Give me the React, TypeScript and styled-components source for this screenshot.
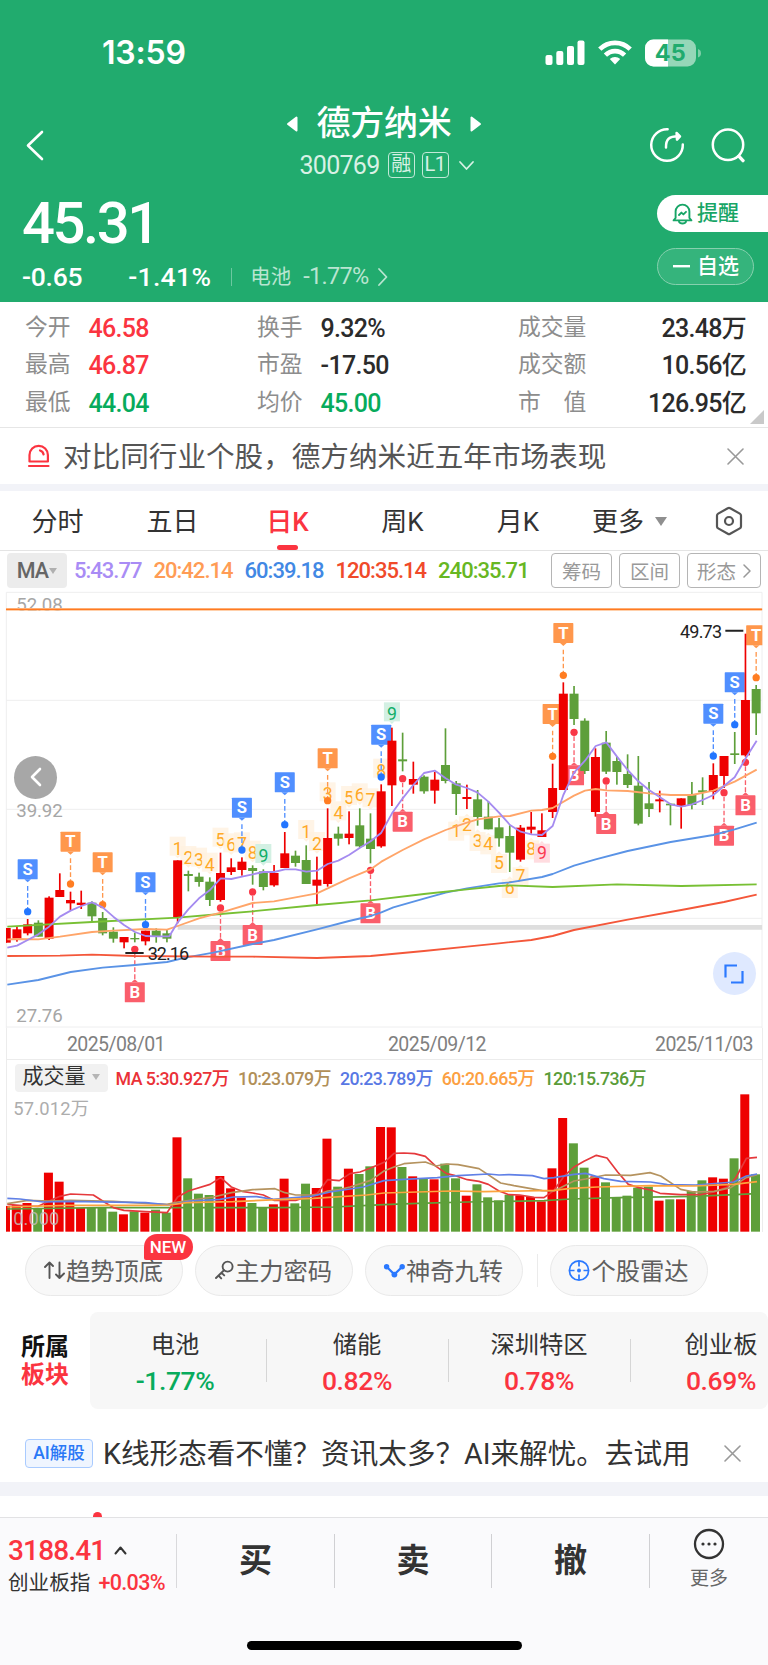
import React from 'react';
import styled, { createGlobalStyle } from 'styled-components';

const SANS = `Roboto, "Noto Sans CJK SC", sans-serif`;
const RED = '#fb3440';
const GREEN = '#07ab5c';
const UP = '#ee0000';
const DOWN = '#5e9f3a';

const GlobalStyle = createGlobalStyle`
  * { box-sizing: border-box; }
  body { margin: 0; background: #fff; font-family: ${SANS}; color: #333; }
  svg { display: block; flex: none; }
`;

const Page = styled.main`
  width: 768px;
  height: 1665px;
  overflow: hidden;
  display: flex;
  flex-direction: column;
  white-space: nowrap;
`;

const Num = styled.span<{ $size: number; $color?: string; $weight?: number; $track?: number }>`
  font-size: ${(p) => p.$size}px;
  line-height: 1;
  color: ${(p) => p.$color ?? 'inherit'};
  font-weight: ${(p) => p.$weight ?? 400};
  letter-spacing: ${(p) => p.$track ?? -0.03}em;
`;

/* ---------- header ---------- */

const Header = styled.header`
  height: 302px;
  flex: none;
  background: #21ab6e;
  color: #fff;
  display: flex;
  flex-direction: column;
`;

const StatusBar = styled.div`
  height: 100px;
  padding: 5px 67px 0 102px;
  display: flex;
  align-items: center;
  justify-content: space-between;
`;

const Clock = styled.span`
  font: 600 32px/1 Inter, sans-serif;
  letter-spacing: -0.2px;
`;

const StatusIcons = styled.div`
  display: flex;
  align-items: center;
  gap: 13px;
`;

const TitleBar = styled.div`
  height: 92px;
  display: grid;
  grid-template-columns: 250px 1fr 250px;
  align-items: start;
`;

const BackSlot = styled.div`
  padding: 30px 0 0 26px;
`;

const TitleStack = styled.div`
  display: flex;
  flex-direction: column;
  align-items: center;
`;

const NameRow = styled.div`
  display: flex;
  align-items: center;
  gap: 18px;
  height: 47px;
`;

const StockName = styled.h1`
  margin: 0;
  font-size: 34px;
  line-height: 49px;
  font-weight: 500;
  letter-spacing: -0.2px;
`;

const CodeRow = styled.div`
  display: flex;
  align-items: center;
  height: 36px;
  padding-left: 14px;
  color: #d8f1e5;
`;

const Badge = styled.span<{ $left: number }>`
  width: 27px;
  height: 26px;
  margin-left: ${(p) => p.$left}px;
  border: 1.5px solid #c3e9d8;
  border-radius: 4px;
  font-size: 20px;
  line-height: 23px;
  letter-spacing: -0.5px;
  text-align: center;
`;

const HeaderActions = styled.div`
  display: flex;
  justify-content: flex-end;
  gap: 25px;
  padding: 27px 22px 0 0;
`;

const QuoteBar = styled.div`
  flex: 1;
  display: flex;
  justify-content: space-between;
`;

const QuoteLeft = styled.div`
  padding: 5px 0 0 22px;
`;

const Price = styled.div`
  font-size: 58px;
  line-height: 52px;
  font-weight: 500;
  letter-spacing: -0.042em;
`;

const ChangeRow = styled.div`
  display: flex;
  align-items: center;
  height: 30px;
  margin-top: 13px;
`;

const ChangePercent = styled(Num)`
  margin-left: 46px;
`;

const ThinRule = styled.i`
  width: 1px;
  height: 18px;
  margin: 0 18px 0 20px;
  background: #6cc8a0;
`;

const SectorLink = styled.span`
  display: flex;
  align-items: center;
  gap: 12px;
  color: #b9e5d1;
  font-size: 20.5px;
  line-height: 26px;
`;

const SectorChange = styled.span`
  display: flex;
  align-items: center;
`;

const QuoteButtons = styled.div`
  display: flex;
  flex-direction: column;
  gap: 16px;
  padding-top: 3px;
`;

const AlertPill = styled.button`
  width: 111px;
  height: 37px;
  padding: 0 0 0 15px;
  display: flex;
  align-items: center;
  gap: 4px;
  border: 0;
  border-radius: 19px 0 0 19px;
  background: #fff;
  color: #17a566;
  font: 500 21px/1 ${SANS};
`;

const WatchPill = styled(AlertPill)`
  width: 97px;
  padding-left: 15px;
  gap: 7px;
  border: 1.5px solid #86d0ae;
  border-radius: 19px;
  background: #35b47c;
  color: #fff;
`;

/* ---------- statistics ---------- */

const Stats = styled.section`
  position: relative;
  height: 125px;
  flex: none;
  padding-top: 7.5px;
  display: grid;
  grid-template-columns: 232px 261px 275px;
  grid-auto-rows: 37.6px;
`;

const Stat = styled.div<{ $end?: boolean }>`
  display: flex;
  align-items: center;
  justify-content: ${(p) => (p.$end ? 'space-between' : 'flex-start')};
  gap: 18px;
  padding: 0 ${(p) => (p.$end ? 22 : 0)}px 0 25px;
`;

const StatLabel = styled.span`
  font-size: 22.8px;
  line-height: 1;
  color: #8d8d8d;
  white-space: pre;
`;

const Corner = styled.i`
  position: absolute;
  right: 4px;
  bottom: 3px;
  border-left: 14px solid transparent;
  border-bottom: 14px solid #c9c9c9;
`;

const Notice = styled.section<{ $height: number; $top?: boolean; $drop: number; $color: string }>`
  height: ${(p) => p.$height}px;
  flex: none;
  display: flex;
  align-items: center;
  padding: ${(p) => p.$drop}px 24px 0 25px;
  border-top: ${(p) => (p.$top ? '1px solid #e6e6e6' : '0')};
  font-size: 28.6px;
  color: ${(p) => p.$color};
`;

const NoticeText = styled.span<{ $left: number; $drop?: number }>`
  flex: 1;
  margin-left: ${(p) => p.$left}px;
  padding-top: ${(p) => p.$drop ?? 0}px;
  line-height: 1;
`;

const NoticeClose = styled.span`
  padding-right: 3px;
`;

const Band = styled.div<{ $height: number }>`
  height: ${(p) => p.$height}px;
  flex: none;
  background: #f2f3f8;
`;

/* ---------- period tabs ---------- */

const Tabs = styled.nav`
  height: 60px;
  flex: none;
  display: grid;
  grid-template-columns: 115px 115px 115px 115px 116px 107px 1fr;
  border-bottom: 1px solid #e4e4e4;
`;

const Tab = styled.div<{ $active?: boolean }>`
  position: relative;
  display: flex;
  align-items: center;
  justify-content: center;
  gap: 11px;
  padding-top: 2px;
  font-size: 26px;
  line-height: 1;
  color: ${(p) => (p.$active ? RED : '#333')};
  font-weight: ${(p) => (p.$active ? 500 : 400)};

  &::after {
    content: '';
    display: ${(p) => (p.$active ? 'block' : 'none')};
    position: absolute;
    left: 47px;
    bottom: 0;
    width: 21px;
    height: 5px;
    border-radius: 3px;
    background: ${RED};
  }
`;

const SettingsTab = styled(Tab)`
  justify-content: flex-end;
  padding: 0 25px 0 0;
`;

const Caret = styled.i<{ $size: number; $color: string }>`
  border: ${(p) => p.$size}px solid transparent;
  border-top: ${(p) => p.$size * 1.4}px solid ${(p) => p.$color};
  border-bottom: 0;
`;

const MaBar = styled.div`
  height: 40px;
  flex: none;
  padding: 2px 7px 0;
  display: flex;
  align-items: flex-start;
  justify-content: space-between;
`;

const MaList = styled.div`
  display: flex;
  align-items: center;
  height: 35px;
`;

const MaPick = styled.span`
  width: 60px;
  height: 35px;
  margin-right: 7px;
  display: flex;
  align-items: center;
  justify-content: center;
  gap: 1px;
  border-radius: 4px;
  background: #ececec;
  color: #666;
  font-size: 21.5px;
  font-weight: 500;
  letter-spacing: -0.8px;
`;

const MaItem = styled(Num)`
  margin-right: 12px;
  padding-top: 1px;
`;

const ToolList = styled.div`
  display: flex;
  gap: 7px;
`;

const Tool = styled.span<{ $width: number }>`
  width: ${(p) => p.$width}px;
  height: 35px;
  display: flex;
  align-items: center;
  justify-content: center;
  gap: 7px;
  border: 1.5px solid #b5b5b5;
  border-radius: 4px;
  color: #999;
  font-size: 19.5px;
`;

/* ---------- charts ---------- */

const ChartArea = styled.section`
  position: relative;
  height: 437px;
  flex: none;
`;

const RoundButton = styled.span<{ $x: number; $y: number; $bg: string }>`
  position: absolute;
  left: ${(p) => p.$x}px;
  top: ${(p) => p.$y}px;
  width: 43px;
  height: 43px;
  display: flex;
  align-items: center;
  justify-content: center;
  border-radius: 50%;
  background: ${(p) => p.$bg};
`;

const DateAxis = styled.div`
  height: 31px;
  flex: none;
  margin: 0 5px 0 6px;
  padding: 3px 9px 0 0;
  display: grid;
  grid-template-columns: 60px 321px 1fr auto;
  align-items: center;
  border: 1px solid #ececec;
  border-width: 0 1.5px;

  &::before {
    content: '';
  }
`;

const VolumePanel = styled.section`
  height: 173px;
  flex: none;
  margin: 0 5px 0 6px;
  border: 1.5px solid #ececec;
  border-bottom: 0;
`;

const VolumeLegend = styled.div`
  height: 36px;
  display: flex;
  align-items: center;
  padding-left: 7.5px;
`;

const VolumePick = styled.span`
  width: 93px;
  height: 28px;
  margin-right: 8px;
  display: flex;
  align-items: center;
  justify-content: center;
  gap: 6px;
  padding-bottom: 3px;
  border-radius: 4px;
  background: #f1f1f1;
  font-size: 21px;
  line-height: 25px;
`;

const VolumeItem = styled(Num)`
  margin-right: 9px;
  padding-top: 1px;
`;

const VolumeSvg = styled.svg`
  margin-left: -7.5px;
  overflow: visible;
`;

/* ---------- tools and sectors ---------- */

const PillRow = styled.section`
  height: 80px;
  flex: none;
  padding: 13px 0 0 24.5px;
  display: flex;
  align-items: flex-start;
  gap: 12px;
`;

const Pill = styled.span`
  position: relative;
  width: 158px;
  height: 51px;
  display: flex;
  align-items: center;
  justify-content: center;
  padding: 0 1px 2px 0;
  border: 1.5px solid #e9e9e9;
  border-radius: 26px;
  background: #f8f8f8;
  color: #5f5f5f;
  font-size: 24.3px;
`;

const PillRule = styled.i`
  width: 1px;
  height: 33px;
  margin: 9px 0 0 2px;
  background: #ebebeb;
`;

const NewTag = styled.span`
  position: absolute;
  left: 118px;
  top: -12px;
  width: 49px;
  height: 26px;
  border-radius: 13px 13px 13px 2px;
  background: ${RED};
  color: #fff;
  font-size: 17px;
  font-weight: 500;
  line-height: 27px;
  text-align: center;
`;

const SectorRow = styled.section`
  height: 97px;
  flex: none;
  display: flex;
`;

const SectorTitle = styled.div`
  width: 90px;
  padding: 21px 0 0 21px;
  font-size: 24px;
  line-height: 28px;
  font-weight: 700;
  color: #111;

  em {
    display: block;
    font-style: normal;
    color: ${RED};
  }
`;

const SectorList = styled.div`
  width: 678px;
  display: flex;
  overflow: hidden;
  border-radius: 8px;
  background: #f7f7f7;
`;

const Sector = styled.div`
  width: 182px;
  flex: none;
  margin-left: -6px;
  margin-right: 6px;
  display: flex;
  flex-direction: column;
  align-items: center;
  gap: 9px;
  padding-top: 19px;
  font-size: 24.3px;
  line-height: 28px;
`;

const SectorRule = styled.i`
  width: 1px;
  height: 43px;
  flex: none;
  margin: 27px 5px 0 -6px;
  background: #d6d6d6;
`;

const AiTag = styled.span`
  width: 68px;
  height: 29px;
  border: 1.5px solid #a9cbff;
  border-radius: 4px;
  background: #eff5ff;
  color: #2a78f6;
  font-size: 17.5px;
  font-weight: 500;
  line-height: 26px;
  text-align: center;
`;

/* ---------- footer ---------- */

const PeekStrip = styled.div`
  height: 21px;
  flex: none;
  padding: 16px 0 0 92.5px;
  overflow: hidden;

  i {
    display: block;
    width: 9px;
    height: 9px;
    border-radius: 50%;
    background: ${RED};
  }
`;

const Footer = styled.footer`
  flex: 1;
  border-top: 1.5px solid #e2e2e4;
  background: #fafafc;
`;

const ActionBar = styled.div`
  height: 106px;
  padding-top: 16px;
  display: grid;
  grid-template-columns: 177px 158px 157px 158px 118px;
`;

const IndexCell = styled.div`
  height: 54px;
  padding: 2px 0 0 8px;
  border-right: 1px solid #d9d9dc;
`;

const IndexLine = styled.div<{ $height: number; $gap: number }>`
  height: ${(p) => p.$height}px;
  display: flex;
  align-items: center;
  gap: ${(p) => p.$gap}px;
  font-size: 20.6px;
  line-height: 1;
`;

const Action = styled.button`
  height: 54px;
  padding: 0;
  border: 0;
  border-right: 1px solid #d0d0d3;
  background: none;
  color: #333;
  font: 700 33px/54px ${SANS};
`;

const MoreCell = styled.div`
  display: flex;
  flex-direction: column;
  align-items: center;
  margin-top: -6px;
  gap: 3px;
  color: #666;
  font-size: 19px;
`;

const HomeBar = styled.i`
  display: block;
  width: 275px;
  height: 9px;
  margin: 17px auto 0;
  border-radius: 5px;
  background: #000;
`;

/* ---------- chart data, in thirds of a pixel ---------- */

const STEP = 32.14;
const xAt = (i: number) => 18.7 + i * STEP;

type Candle = [up: number, high: number, top: number, bottom: number, low: number];

const CANDLES: Candle[] = [
  [1, 1014, 1014, 1058, 1058], [1, 1008, 1018, 1046, 1055], [1, 987, 1003, 1030, 1036], [0, 991, 998, 1040, 1040],
  [1, 919, 923, 1046, 1050], [1, 850, 900, 921, 921], [1, 905, 930, 940, 960], [1, 902, 938, 945, 957],
  [0, 934, 938, 979, 995], [0, 966, 984, 1030, 1036], [0, 1012, 1025, 1046, 1058], [1, 1041, 1041, 1057, 1075],
  [0, 1028, 1044, 1048, 1057], [1, 1022, 1022, 1054, 1066], [0, 1015, 1022, 1040, 1058], [0, 1020, 1030, 1046, 1057],
  [1, 811, 811, 983, 1000], [0, 842, 852, 858, 904], [0, 848, 860, 876, 890], [0, 862, 875, 930, 948],
  [1, 788, 849, 930, 935], [1, 805, 832, 846, 855], [1, 802, 815, 840, 857], [0, 826, 834, 843, 884],
  [0, 838, 844, 891, 901], [1, 825, 849, 886, 890], [1, 726, 790, 834, 834], [0, 782, 797, 819, 830],
  [0, 766, 810, 882, 882], [1, 800, 869, 887, 944], [1, 655, 744, 882, 890], [0, 710, 731, 746, 767],
  [1, 664, 731, 744, 763], [0, 655, 706, 769, 774], [0, 670, 746, 777, 820], [1, 583, 604, 769, 773],
  [1, 413, 452, 586, 648], [0, 428, 508, 514, 544], [1, 515, 567, 584, 611], [0, 556, 560, 604, 611],
  [1, 546, 569, 602, 641], [0, 415, 525, 573, 580], [0, 573, 580, 612, 675], [1, 584, 621, 627, 657],
  [0, 600, 628, 681, 707], [0, 633, 680, 718, 718], [0, 684, 712, 745, 770], [0, 706, 738, 788, 846],
  [1, 705, 713, 809, 815], [1, 666, 710, 719, 731], [1, 670, 721, 741, 741], [1, 521, 594, 666, 684],
  [1, 277, 311, 600, 600], [0, 288, 311, 387, 405], [0, 385, 392, 543, 552], [1, 475, 501, 666, 680],
  [0, 423, 458, 545, 552], [0, 500, 513, 546, 584], [0, 493, 552, 585, 594], [0, 498, 587, 701, 706],
  [0, 576, 640, 657, 681], [1, 602, 628, 634, 667], [0, 640, 641, 646, 706], [1, 625, 625, 649, 716],
  [0, 576, 613, 645, 658], [0, 562, 601, 607, 645], [1, 520, 555, 606, 628], [1, 498, 498, 558, 594],
  [0, 426, 490, 495, 522], [1, 131, 330, 496, 500], [0, 285, 297, 370, 435],
];

const VOLUME_TOPS = [
  557, 555, 548, 565, 457, 484, 540, 563, 563, 562, 574, 582, 573, 577, 568, 577, 351, 474, 520, 524, 467, 504, 532,
  548, 560, 552, 475, 549, 490, 503, 355, 499, 445, 461, 438, 320, 321, 440, 468, 473, 477, 430, 474, 526, 492, 531,
  540, 523, 525, 530, 543, 444, 293, 369, 442, 468, 486, 530, 526, 502, 499, 541, 537, 537, 512, 480, 471, 475, 414,
  222, 462,
];

const PRICE_LINES: [string, string][] = [
  ['#5a93e6', '22,1184 115,1170 212,1146 308,1133 405,1125 501,1116 560,1102 640,1088 758,1062 822,1050 951,1018 1047,993 1112,978 1144,967 1180,952 1272,926 1337,908 1401,895 1497,880 1530,877 1626,861 1658,852 1722,827 1787,808 1883,783 2012,756 2140,735 2204,718 2270,698'],
  ['#f4573a', '22,1098 180,1097 276,1094 405,1098 640,1100 758,1100 951,1104 1112,1098 1272,1083 1401,1070 1497,1060 1594,1050 1658,1038 1722,1020 1883,989 2044,960 2172,936 2270,914'],
  ['#78c034', '22,1010 276,996 533,983 662,972 758,964 951,945 1112,931 1272,912 1401,898 1497,888 1530,886 1658,891 1851,883 2044,888 2270,883'],
  ['#ffa569', '22,1048 51,1047 115,1048 180,1040 276,1026 340,1022 437,1017 501,1019 533,1008 597,985 662,968 758,939 822,934 951,910 1047,865 1112,838 1144,815 1208,780 1272,748 1337,720 1401,698 1433,688 1497,679 1530,678 1594,662 1626,660 1658,654 1722,617 1755,602 1787,597 1819,601 1883,603 1947,610 2012,615 2076,615 2140,602 2204,575 2237,557 2270,539'],
  ['#a58bf0', '22,1073 51,1067 83,1050 115,1033 147,1010 180,980 212,962 244,948 276,937 308,952 340,980 372,1005 405,1026 437,1038 469,1039 508,1039 533,997 565,958 597,925 630,900 662,865 694,867 726,860 758,853 790,846 822,846 855,838 887,838 919,845 951,842 983,822 1015,812 1047,795 1080,773 1112,754 1144,728 1176,670 1208,625 1240,585 1272,549 1305,542 1337,565 1369,584 1401,594 1433,608 1465,635 1497,668 1530,705 1562,725 1594,733 1626,735 1658,708 1690,615 1722,548 1755,512 1787,468 1819,457 1851,500 1883,540 1915,574 1947,600 1980,622 2012,643 2044,650 2076,643 2108,630 2140,615 2172,588 2204,562 2237,505 2270,452'],
];

const VOLUME_LINES: [string, string][] = [
  ['#5e9f3a', '22,566 300,562 830,562 1000,560 1152,553 1252,549 1402,545 1632,541 1712,536 1852,532 2082,528 2271,520'],
  ['#e5393c', '22,552 83,557 115,558 147,542 180,528 212,521 280,524 308,542 340,562 372,570 437,574 501,577 533,530 565,512 630,492 662,472 694,500 726,513 758,518 790,524 822,540 887,540 951,520 983,478 1018,481 1050,460 1080,455 1112,443 1154,425 1182,399 1212,398 1244,400 1276,408 1308,438 1340,460 1366,466 1402,478 1437,483 1465,492 1497,512 1527,523 1559,524 1602,531 1632,532 1662,510 1692,468 1722,440 1752,423 1789,405 1821,413 1853,455 1885,492 1917,502 1952,509 1980,519 2042,523 2102,523 2142,515 2182,500 2207,473 2239,414 2271,411'],
  ['#b5935f', '22,550 83,540 147,542 212,540 340,543 450,550 501,552 533,545 640,530 694,517 758,508 825,505 855,517 887,524 951,524 983,512 1018,508 1050,500 1112,480 1152,452 1182,440 1212,430 1276,425 1308,437 1340,431 1374,433 1437,445 1502,488 1542,496 1627,511 1662,512 1722,482 1757,476 1817,464 1892,465 1950,457 1982,467 2042,507 2082,515 2142,513 2192,502 2239,472 2271,463'],
  ['#6080e6', '22,534 60,536 130,545 212,543 437,547 510,554 570,542 660,537 700,530 770,529 820,537 940,527 990,515 1090,500 1152,481 1212,477 1312,472 1374,466 1465,461 1497,464 1527,463 1597,466 1632,475 1662,472 1722,462 1757,459 1812,475 1862,483 1952,485 2002,493 2087,494 2202,485 2239,467 2271,461'],
  ['#fba43f', '22,560 200,555 450,555 510,554 560,547 700,544 850,537 940,534 1100,524 1152,518 1252,515 1352,512 1452,514 1662,510 1712,504 1792,500 1952,496 2082,497 2202,492 2271,484'],
];

type Side = 'S' | 'T' | 'B';
const MARKS: [Side, number, number][] = [
  ['S', 2, 965], ['S', 13, 1004], ['S', 22, 780], ['S', 26, 704], ['S', 35, 561], ['S', 66, 498], ['S', 68, 404],
  ['T', 6, 882], ['T', 9, 944], ['T', 30, 632], ['T', 51, 499], ['T', 52, 256], ['T', 70, 263],
  ['B', 12, 1078], ['B', 20, 954], ['B', 23, 906], ['B', 34, 841], ['B', 37, 566], ['B', 53, 427], ['B', 56, 573],
  ['B', 67, 608], ['B', 69, 517],
];
const MARK_FILL: Record<Side, string> = { S: '#508fff', T: '#ff974c', B: '#fa5e6b' };
const DOT_FILL: Record<Side, string> = { S: '#2376ff', T: '#ff7d22', B: '#f93746' };

/* digit, candle, centre of the digit, side of the candle */
const COUNTS: [number, number, number, number][] = [
  [1, 16, 775, 1], [2, 17, 803, 1], [3, 18, 808, 1], [4, 19, 823, 1], [5, 20, 748, 1], [6, 21, 765, 1],
  [7, 22, 762, 1], [8, 23, 787, 1], [9, 24, 797, 1], [1, 28, 725, 1], [2, 29, 761, 1], [3, 30, 612, 1],
  [4, 31, 669, 1], [5, 32, 623, 1], [6, 33, 615, 1], [7, 34, 630, 1], [8, 35, 541, 1], [9, 36, 372, 1],
  [1, 42, 721, 0], [2, 43, 705, 0], [3, 44, 752, 0], [4, 45, 762, 0], [5, 46, 818, 0], [6, 47, 893, 0],
  [7, 48, 858, 0], [8, 49, 777, 0], [9, 50, 787, 0],
];

const Mark = ({ side, index, dot }: { side: Side; index: number; dot: number }) => {
  const x = xAt(index);
  const below = side === 'B';
  const top = below ? dot + 99 : dot - 157;
  const tip = below ? `M${x - 10} ${top}l10 -9l10 9z` : `M${x - 10} ${top + 60}l10 9l10 -9z`;
  return (
    <g>
      <path
        d={below ? `M${x} ${dot + 12}V${top - 8}` : `M${x} ${top + 80}V${dot - 10}`}
        stroke={MARK_FILL[side]}
        strokeWidth={4}
        strokeDasharray="14 7"
      />
      <rect x={x - 30} y={top} width={60} height={60} rx={2} fill={MARK_FILL[side]} />
      <path d={tip} fill={MARK_FILL[side]} />
      <text x={x} y={top + 47} fontSize={50} fontWeight={700} textAnchor="middle" fill="#fff">{side}</text>
      <circle cx={x} cy={dot} r={11} fill={DOT_FILL[side]} />
    </g>
  );
};

const Count = ({ digit, index, y, above }: { digit: number; index: number; y: number; above: boolean }) => {
  const x = xAt(index);
  const last = digit === 9;
  const bg = !last ? '#fff1e0' : above ? '#d3f0e3' : '#ffdce0';
  const fg = !last ? '#ffa928' : above ? '#12ae68' : '#fb3a50';
  const top = above ? y - 35 : y - 26;
  return (
    <g>
      <rect x={x - 24} y={top} width={48} height={57} fill={bg} fillOpacity={last ? 1 : 0.8} />
      <path d={above ? `M${x - 8} ${top + 57}l8 8l8 -8z` : `M${x - 8} ${top}l8 -8l8 8z`} fill={bg} />
      <text x={x} y={y + 19} fontSize={53} textAnchor="middle" fill={fg}>{digit}</text>
    </g>
  );
};

const PriceChart = () => (
  <svg width="768" height="437" viewBox="0 3 2304 1311" fontFamily="Roboto">
    <defs>
      <clipPath id="plot"><rect x="18" y="0" width="2269" height="1320" /></clipPath>
    </defs>
    <g stroke="#eeeeef" strokeWidth="3" fill="none">
      <path d="M19 7H2286V1320M19 7V1320M19 331H2286M19 658H2286M19 985H2286M19 1311H2286" />
    </g>
    <g fill="#a6a6a6" fontSize="56">
      <text x="49" y="64" textLength="139">52.08</text>
      <text x="49" y="680" textLength="139">39.92</text>
      <text x="49" y="1296" textLength="139">27.76</text>
    </g>
    <g clipPath="url(#plot)">
      <path d="M18 58H2287" stroke="#ffc08f" strokeWidth="8" />
      <path d="M18 58H2287" stroke="#ff7a22" strokeWidth="4" />
      <path d="M533 1012H2287" stroke="#dedede" strokeWidth="14" />
      {COUNTS.map(([d, i, y, up]) => <Count key={i} digit={d} index={i} y={y} above={up === 1} />)}
      {MARKS.map(([s, i, y]) => <Mark key={s + i} side={s} index={i} dot={y} />)}
      {CANDLES.map(([up, high, top, bottom, low], i) => (
        <g key={i} fill={up ? UP : DOWN}>
          <rect x={xAt(i) - 2.5} y={high} width={5} height={low - high} />
          <rect x={xAt(i) - 13.5} y={top} width={27} height={bottom - top} />
        </g>
      ))}
      {PRICE_LINES.map(([color, points]) => (
        <polyline key={color} points={points} fill="none" stroke={color} strokeWidth="5.5" strokeLinejoin="round" />
      ))}
    </g>
    <g stroke="#222" strokeWidth="6">
      <path d="M376 1089H431M2176 122H2230" />
    </g>
    <g fill="#222" fontSize="54">
      <text x="443" y="1110" textLength="124">32.16</text>
      <text x="2040" y="143" textLength="126">49.73</text>
    </g>
  </svg>
);

/* ---------- icons ---------- */

const Chevron = ({ w, h, d, color, sw }: { w: number; h: number; d: string; color: string; sw: number }) => (
  <svg width={w} height={h} viewBox={`0 0 ${w} ${h}`} fill="none" stroke={color} strokeWidth={sw} strokeLinecap="round" strokeLinejoin="round">
    <path d={d} />
  </svg>
);

const CloseIcon = () => <Chevron w={17} h={17} d="M1 1L16 16M16 1L1 16" color="#999" sw={1.6} />;

const STATS: [string, string, string?][] = [
  ['今开', '46.58', RED], ['换手', '9.32%'], ['成交量', '23.48万'],
  ['最高', '46.87', RED], ['市盈', '-17.50'], ['成交额', '10.56亿'],
  ['最低', '44.04', GREEN], ['均价', '45.00', GREEN], ['市　值', '126.95亿'],
];

const MA_ITEMS = [
  ['5:43.77', '#a98cf5'], ['20:42.14', '#ff9c55'], ['60:39.18', '#4288e4'], ['120:35.14', '#f04a2a'], ['240:35.71', '#67b722'],
];

const VOL_ITEMS = [
  ['MA 5:30.927万', '#ea3137'], ['10:23.079万', '#b18f58'], ['20:23.789万', '#5878e4'], ['60:20.665万', '#fca042'], ['120:15.736万', '#5a9c38'],
];

const SECTORS = [
  ['电池', '-1.77%', GREEN], ['储能', '0.82%', RED], ['深圳特区', '0.78%', RED], ['创业板', '0.69%', RED],
];

export default function App() {
  return (
    <Page>
      <GlobalStyle />
      <Header>
        <StatusBar>
          <Clock>13:59</Clock>
          <StatusIcons>
            <svg width="40" height="26" viewBox="0 0 40 26" fill="#fff">
              <rect x="0.5" y="15" width="7" height="10" rx="2" />
              <rect x="11.3" y="11" width="7" height="14" rx="2" />
              <rect x="22" y="6" width="7" height="19" rx="2" />
              <rect x="32.5" y="0.5" width="7" height="24.5" rx="2" />
            </svg>
            <svg width="34" height="25" viewBox="0 0 34 25" fill="none" stroke="#fff" strokeWidth="4.6">
              <path d="M1.8 9.2C10 .7 24 .7 32.2 9.2" />
              <path d="M7.4 15.2C12.8 9.8 21.2 9.8 26.6 15.2" />
              <path d="M17 24.5L11.8 19C14.6 16.3 19.4 16.3 22.2 19Z" fill="#fff" stroke="none" />
            </svg>
            <svg width="56" height="28" viewBox="0 0 56 28">
              <defs><clipPath id="cell"><rect width="51" height="27" y=".5" rx="8.5" /></clipPath></defs>
              <g clipPath="url(#cell)">
                <rect width="51" height="28" fill="#95d7b8" />
                <rect width="23" height="28" fill="#fff" />
              </g>
              <path d="M53 10q3 1 3 4.2t-3 4.2z" fill="#7fcfa9" />
              <text x="25.2" y="22.3" fontFamily="Inter" fontWeight="700" fontSize="23.5" textAnchor="middle" fill="#21ab6e" textLength="31">45</text>
            </svg>
          </StatusIcons>
        </StatusBar>
        <TitleBar>
          <BackSlot><Chevron w={18} h={31} d="M16 2L2 15.5L16 29" color="#fff" sw={2.6} /></BackSlot>
          <TitleStack>
            <NameRow>
              <svg width="12" height="18" viewBox="0 0 12 18"><path d="M10.5 2.5V15.5L2 9Z" fill="#fff" stroke="#fff" strokeWidth="2" strokeLinejoin="round" /></svg>
              <StockName>德方纳米</StockName>
              <svg width="12" height="18" viewBox="0 0 12 18"><path d="M1.5 2.5V15.5L10 9Z" fill="#fff" stroke="#fff" strokeWidth="2" strokeLinejoin="round" /></svg>
            </NameRow>
            <CodeRow>
              <Num $size={25} $track={-0.028}>300769</Num>
              <Badge $left={8}>融</Badge>
              <Badge $left={7}>L1</Badge>
              <Chevron w={34} h={11} d="M11 2L17.5 9L24 2" color="#d8f1e5" sw={1.8} />
            </CodeRow>
          </TitleStack>
          <HeaderActions>
            <svg width="36" height="36" viewBox="0 0 36 36" fill="none" stroke="#fff" strokeWidth="2.5" strokeLinecap="round" strokeLinejoin="round">
              <path d="M18.6 2.2A15.8 15.8 0 1 0 33.8 17.4" />
              <path d="M17 20.5C16.8 12.2 20.2 9.3 29 9.3" />
              <path d="M27.6 6L31 9.3L28 12.6Z" fill="#fff" />
            </svg>
            <svg width="36" height="36" viewBox="0 0 36 36" fill="none" stroke="#fff" strokeWidth="2.5" strokeLinecap="round">
              <circle cx="18" cy="17.8" r="15.2" />
              <path d="M28.8 29.2L33 33.6" strokeWidth="3.4" />
            </svg>
          </HeaderActions>
        </TitleBar>
        <QuoteBar>
          <QuoteLeft>
            <Price>45.31</Price>
            <ChangeRow>
              <Num $size={26.5} $weight={500} $track={-0.01}>-0.65</Num>
              <ChangePercent $size={26.5} $weight={500} $track={0.012}>-1.41%</ChangePercent>
              <ThinRule />
              <SectorLink>
                电池
                <SectorChange>
                  <Num $size={23.5}>-1.77%</Num>
                  <Chevron w={20} h={20} d="M10 2L17.5 10L10 18" color="#b9e5d1" sw={1.8} />
                </SectorChange>
              </SectorLink>
            </ChangeRow>
          </QuoteLeft>
          <QuoteButtons>
            <AlertPill>
              <svg width="21" height="22" viewBox="0 0 21 22" fill="none" stroke="#17a566" strokeWidth="1.9" strokeLinecap="round" strokeLinejoin="round">
                <path d="M3.6 15V8.6a6.9 7 0 0 1 13.8 0V15l2 2.4H1.6Z" />
                <path d="M7 18.6a3.6 2.4 0 0 0 7 0" />
                <path d="M7 12L9.4 9.6L11.4 11.4L14 8.8" />
              </svg>
              提醒
            </AlertPill>
            <WatchPill>
              <svg width="17" height="3" viewBox="0 0 17 3"><rect width="17" height="2.4" fill="#fff" /></svg>
              自选
            </WatchPill>
          </QuoteButtons>
        </QuoteBar>
      </Header>

      <Stats>
        {STATS.map(([label, value, color], i) => (
          <Stat key={label} $end={i % 3 === 2}>
            <StatLabel>{label}</StatLabel>
            <Num $size={25} $weight={500} $track={-0.028} $color={color ?? '#2b2b2b'}>{value}</Num>
          </Stat>
        ))}
        <Corner />
      </Stats>

      <Notice $height={57} $top $drop={0} $color="#555">
        <svg width="26" height="24" viewBox="0 0 26 24" fill="none" stroke={RED} strokeWidth="2.2" strokeLinecap="round" strokeLinejoin="round">
          <path d="M4.5 17.5V11a9.2 9.2 0 0 1 18.4 0V17.5Z" />
          <path d="M4 22H23.5" />
          <path d="M15 6.5q3.2 1 3.6 4" />
        </svg>
        <NoticeText $left={12} $drop={3}>对比同行业个股，德方纳米近五年市场表现</NoticeText>
        <CloseIcon />
      </Notice>
      <Band $height={7} />

      <Tabs>
        <Tab>分时</Tab>
        <Tab>五日</Tab>
        <Tab $active>日K</Tab>
        <Tab>周K</Tab>
        <Tab>月K</Tab>
        <Tab>更多<Caret $size={6.5} $color="#8f8f8f" /></Tab>
        <SettingsTab>
          <svg width="28" height="30" viewBox="0 0 28 30" fill="none" stroke="#555" strokeWidth="2.2" strokeLinejoin="round">
            <path d="M12.8 2.2Q14 1.5 15.2 2.2L24.8 7.6Q26 8.3 26 9.6V20.4Q26 21.7 24.8 22.4L15.2 27.8Q14 28.5 12.8 27.8L3.2 22.4Q2 21.7 2 20.4V9.6Q2 8.3 3.2 7.6Z" />
            <circle cx="14" cy="15" r="4" />
          </svg>
        </SettingsTab>
      </Tabs>

      <MaBar>
        <MaList>
          <MaPick>MA<Caret $size={4.5} $color="#b0b0b0" /></MaPick>
          {MA_ITEMS.map(([text, color]) => <MaItem key={text} $size={22} $weight={500} $track={-0.045} $color={color}>{text}</MaItem>)}
        </MaList>
        <ToolList>
          <Tool $width={61}>筹码</Tool>
          <Tool $width={61}>区间</Tool>
          <Tool $width={74}>形态<Chevron w={8} h={14} d="M1 1L7 7L1 13" color="#999" sw={1.5} /></Tool>
        </ToolList>
      </MaBar>

      <ChartArea>
        <PriceChart />
        <RoundButton $x={14} $y={164.5} $bg="#a7a7a7">
          <Chevron w={14} h={20} d="M11 2L3 10L11 18" color="#fff" sw={2.6} />
        </RoundButton>
        <RoundButton $x={712.5} $y={361} $bg="#dfe9ff">
          <svg width="20" height="20" viewBox="0 0 20 20" fill="none" stroke="#2b79ff" strokeWidth="2.2">
            <path d="M1.5 13.5V1.5H13M7 18.5H18.5V7" />
          </svg>
        </RoundButton>
      </ChartArea>

      <DateAxis>
        <Num $size={19.5} $color="#808080">2025/08/01</Num>
        <Num $size={19.5} $color="#808080">2025/09/12</Num>
        <Num $size={19.5} $color="#808080">2025/11/03</Num>
      </DateAxis>

      <VolumePanel>
        <VolumeLegend>
          <VolumePick>成交量<Caret $size={4.5} $color="#b5b5b5" /></VolumePick>
          {VOL_ITEMS.map(([text, color]) => <VolumeItem key={text} $size={17.8} $weight={500} $track={-0.03} $color={color}>{text}</VolumeItem>)}
        </VolumeLegend>
        <VolumeSvg width="768" height="136" viewBox="0 227 2304 408" fontFamily={SANS}>
          <text x="40" y="285" fontSize="55" fill="#adadad" textLength="227">57.012万</text>
          {VOLUME_TOPS.map((top, i) => (
            <rect key={i} x={Math.max(18, xAt(i) - 15.5)} y={top} width={i ? 27 : 12} height={634 - top} fill={CANDLES[i][0] ? UP : DOWN} />
          ))}
          {VOLUME_LINES.map(([color, points]) => (
            <polyline key={color} points={points} fill="none" stroke={color} strokeWidth="5" strokeLinejoin="round" />
          ))}
          <text x="40" y="614" fontSize="55" fill="#c4bcb8" fillOpacity="0.85" textLength="138">0.000</text>
        </VolumeSvg>
      </VolumePanel>

      <PillRow>
        <Pill>
          <svg width="23" height="22" viewBox="0 0 23 22" fill="none" stroke="#555" strokeWidth="1.9" strokeLinecap="round" strokeLinejoin="round">
            <path d="M6.5 19V3.5M2 8L6.5 3.5L10 7M16.5 3.5V19M21 14.5L16.5 19L13 15.5" />
          </svg>
          趋势顶底
          <NewTag>NEW</NewTag>
        </Pill>
        <Pill>
          <svg width="21" height="22" viewBox="0 0 21 22" fill="none" stroke="#555" strokeWidth="1.9" strokeLinecap="round">
            <circle cx="13.6" cy="7.6" r="5" />
            <path d="M10 11.2L2 19M4.6 16.6L7.2 19.4M7.6 13.8L10.2 16.4" />
          </svg>
          主力密码
        </Pill>
        <Pill>
          <svg width="23" height="22" viewBox="0 0 23 22" fill="none" stroke="#2b79ff" strokeWidth="2.2" strokeLinejoin="round">
            <path d="M3.6 7.8L11.4 15.4L19.2 7.8" />
            <g fill="#2b79ff" stroke="none"><circle cx="3.6" cy="7.8" r="2.7" /><circle cx="19.2" cy="7.8" r="2.7" /><circle cx="11.4" cy="15.6" r="2.9" /></g>
          </svg>
          神奇九转
        </Pill>
        <PillRule />
        <Pill>
          <svg width="24" height="22" viewBox="0 0 24 22" fill="none" stroke="#2b79ff" strokeWidth="1.7">
            <circle cx="12" cy="11.5" r="9.6" />
            <path d="M12 2V7.5M12 15.5V21M2.5 11.5H7.5M16.5 11.5H21.5" />
            <circle cx="12" cy="11.5" r="2" fill="#2b79ff" stroke="none" />
          </svg>
          个股雷达
        </Pill>
      </PillRow>

      <SectorRow>
        <SectorTitle>所属<em>板块</em></SectorTitle>
        <SectorList>
          {SECTORS.map(([name, change, color], i) => (
            <React.Fragment key={name}>
              {i > 0 && <SectorRule />}
              <Sector>
                {name}
                <Num $size={26.5} $weight={500} $color={color} $track={-0.015}>{change}</Num>
              </Sector>
            </React.Fragment>
          ))}
        </SectorList>
      </SectorRow>

      <Notice $height={73} $drop={16} $color="#333">
        <AiTag>AI解股</AiTag>
        <NoticeText $left={10} $drop={2}>K线形态看不懂？资讯太多？AI来解忧。去试用</NoticeText>
        <NoticeClose><CloseIcon /></NoticeClose>
      </Notice>
      <Band $height={14} />
      <PeekStrip><i /></PeekStrip>

      <Footer>
        <ActionBar>
          <IndexCell>
            <IndexLine $height={29} $gap={9}>
              <Num $size={28} $weight={500} $color={RED}>3188.41</Num>
              <Chevron w={13} h={9} d="M1.5 7.5L6.5 1.5L11.5 7.5" color="#333" sw={2} />
            </IndexLine>
            <IndexLine $height={36} $gap={8}>
              创业板指<Num $size={21.5} $color={RED} $weight={500}>+0.03%</Num>
            </IndexLine>
          </IndexCell>
          <Action>买</Action>
          <Action>卖</Action>
          <Action>撤</Action>
          <MoreCell>
            <svg width="32" height="32" viewBox="0 0 32 32" fill="none" stroke="#333" strokeWidth="2.3">
              <circle cx="16" cy="16" r="14" />
              <g fill="#333" stroke="none"><circle cx="10" cy="16" r="1.6" /><circle cx="16" cy="16" r="1.6" /><circle cx="22" cy="16" r="1.6" /></g>
            </svg>
            更多
          </MoreCell>
        </ActionBar>
        <HomeBar />
      </Footer>
    </Page>
  );
}
